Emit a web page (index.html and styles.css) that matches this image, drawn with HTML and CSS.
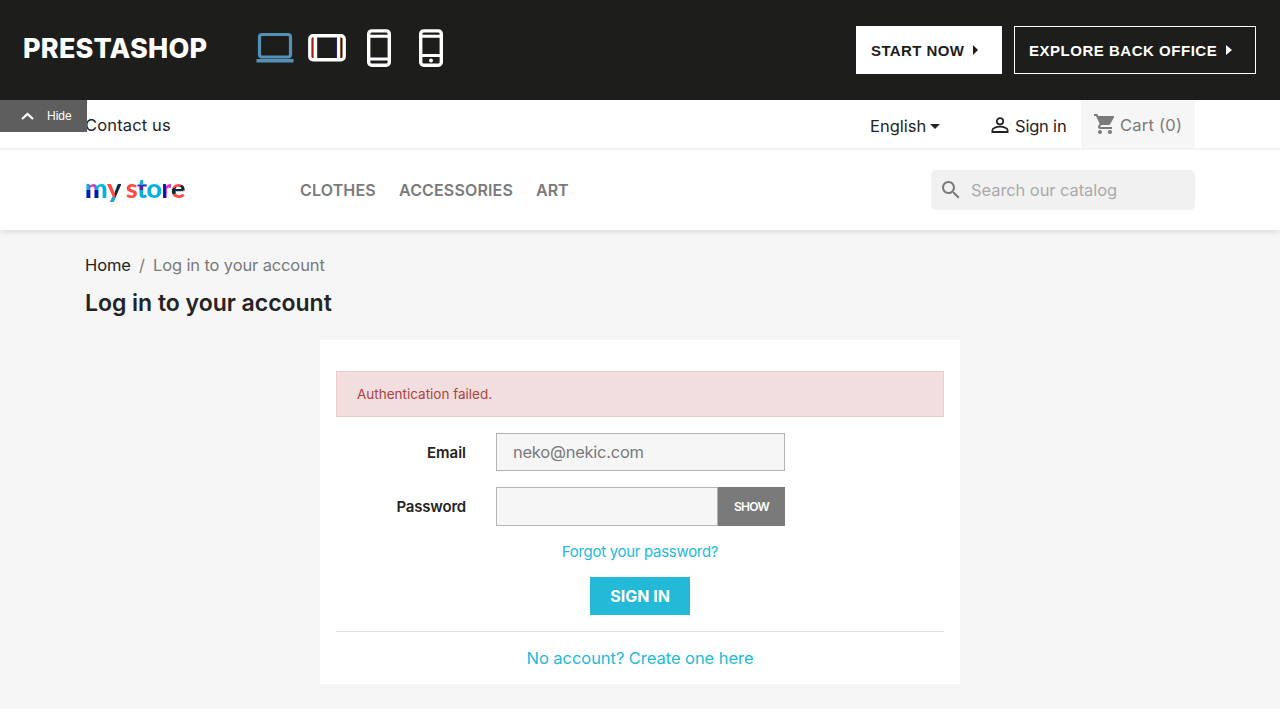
FILE: index.html
```html
<!DOCTYPE html>
<html lang="en">
<head>
<meta charset="utf-8">
<title>Log in to your account</title>
<link rel="stylesheet" href="styles.css">
</head>
<body>
<header class="demo-bar">
  <span class="brand">PRESTASHOP</span>
  <div class="devices">
    <svg class="device laptop" width="38" height="38" viewBox="0 0 38 38"><rect x="3.500" y="5.500" width="31" height="22.500" rx="2.500" fill="none" stroke="currentColor" stroke-width="3.200"/><path d="M.5 30h37v3.500H.5z" fill="currentColor"/></svg>
    <svg class="device tablet" width="38" height="38" viewBox="0 0 38 38"><rect x="1.800" y="6.800" width="34.400" height="24" rx="3.200" fill="none" stroke="currentColor" stroke-width="3.400"/><path d="M7.500 8v22M30.500 8v22" stroke="currentColor" stroke-width="4"/><path d="M4.500 8.500v20.500M9.500 8.500v20.500" stroke="#a3211c" stroke-width="1"/><path d="M28.500 8.500v20.500" stroke="#1c1ca8" stroke-width="1"/><path d="M32.500 8.500v20.500" stroke="#8a5a12" stroke-width="1"/></svg>
    <svg class="device phone" width="26" height="38" viewBox="0 0 26 38"><rect x="2.700" y="1.900" width="20.600" height="34.400" rx="3" fill="none" stroke="currentColor" stroke-width="3.400"/><path d="M3 7.200h20M3 30h20" stroke="currentColor" stroke-width="3"/></svg>
    <svg class="device mobile" width="26" height="38" viewBox="0 0 26 38"><rect x="2.700" y="1.900" width="20.600" height="34.400" rx="3" fill="none" stroke="currentColor" stroke-width="3.400"/><path d="M3 7.200h20M3 26.400h20" stroke="currentColor" stroke-width="3"/><circle cx="13" cy="31.400" r="2" fill="currentColor"/></svg>
  </div>
  <a class="demo-btn start"><span>START NOW</span><svg width="5" height="10" viewBox="0 0 5 10"><path d="M0 0l5 5-5 5z" fill="currentColor"/></svg></a>
  <a class="demo-btn explore"><span>EXPLORE BACK OFFICE</span><svg width="6" height="10" viewBox="0 0 6 10"><path d="M0 0l6 5-6 5z" fill="currentColor"/></svg></a>
</header>
<div class="shop">
  <a class="hide-tab"><svg width="13" height="8" viewBox="0 0 13 8"><path d="M1 7l5.500-5L12 7" fill="none" stroke="#fff" stroke-width="2.300"/></svg><span>Hide</span></a>
  <nav class="top-nav"><div class="container top-row">
    <a class="t contact">Contact us</a>
    <a class="t language"><span>English</span><svg width="10" height="5" viewBox="0 0 10 5"><path d="M0 0h10L5 5z" fill="currentColor"/></svg></a>
    <a class="t signin"><svg width="18" height="17" viewBox="0 0 18 17"><circle cx="9" cy="4.300" r="3.200" fill="none" stroke="currentColor" stroke-width="1.800"/><path d="M1.400 15v-2c0-2 4.300-3.300 7.600-3.300s7.600 1.300 7.600 3.300v2z" fill="none" stroke="currentColor" stroke-width="1.800"/></svg><span>Sign in</span></a>
    <a class="t cart"><svg width="24" height="24" viewBox="0 0 24 24"><path fill="currentColor" d="M7 18c-1.100 0-1.990.9-1.990 2S5.900 22 7 22s2-.9 2-2-.9-2-2-2zM1 2v2h2l3.600 7.590-1.350 2.450c-.16.280-.25.610-.25.960 0 1.100.9 2 2 2h12v-2H7.420c-.14 0-.25-.11-.25-.25l.03-.12.900-1.630h7.450c.75 0 1.410-.41 1.750-1.030l3.580-6.490c.08-.14.120-.31.120-.48 0-.55-.45-1-1-1H5.210l-.94-2H1zm16 16c-1.100 0-1.990.9-1.990 2s.89 2 1.990 2 2-.9 2-2-.9-2-2-2z"/></svg><span>Cart (0)</span></a>
  </div></nav>
  <div class="main-header"><div class="container header-row">
    <a class="store-logo"><span class="l-m">m</span><span class="l-y">y</span><span class="l-s">s</span><span class="l-t">t</span><span class="l-o">o</span><span class="l-r">r</span><span class="l-e">e</span></a>
    <a class="menu clothes">CLOTHES</a><a class="menu accessories">ACCESSORIES</a><a class="menu art">ART</a>
    <div class="search"><svg width="24" height="24" viewBox="0 0 24 24"><path fill="currentColor" d="M15.500 14h-.79l-.28-.27C15.410 12.590 16 11.110 16 9.500 16 5.910 13.090 3 9.500 3S3 5.910 3 9.500 5.910 16 9.500 16c1.610 0 3.090-.59 4.230-1.570l.27.280v.79l5 4.990L20.490 19l-4.990-5zm-6 0C7.010 14 5 11.990 5 9.500S7.010 5 9.500 5 14 7.010 14 9.500 11.990 14 9.500 14z"/></svg><span>Search our catalog</span></div>
  </div></div>
  <main class="container content">
    <div class="crumbs"><a class="home">Home</a><span class="slash">/</span><span class="here">Log in to your account</span></div>
    <h1><span>Log in to your account</span></h1>
    <section class="card">
      <div class="alert"><span>Authentication failed.</span></div>
      <div class="field"><label><span class="email-label">Email</span></label><div class="input email"><span>neko@nekic.com</span></div></div>
      <div class="field"><label><span class="pass-label">Password</span></label><div class="input pass"></div><div class="show"><span>SHOW</span></div></div>
      <a class="forgot"><span>Forgot your password?</span></a>
      <div class="submit"><span>SIGN IN</span></div>
      <a class="create"><span>No account? Create one here</span></a>
    </section>
  </main>
</div>
</body>
</html>
```
FILE: styles.css
```css
* { box-sizing: border-box; }
body { margin: 0; height: 720px; overflow: hidden; background: #fff; color: #232323; font-family: Inter, "Liberation Sans", sans-serif; font-size: 16.5px; }
svg { display: block; flex: none; }
a, span { white-space: nowrap; }
.demo-bar { height: 100px; background: #1d1d1b; color: #fff; display: flex; align-items: flex-start; padding: 26px 24px 0 23px; }
.brand { width: 233px; font-size: 27px; font-weight: 800; letter-spacing: .2px; line-height: 45px; }
.devices { display: flex; gap: 0; padding-top: 3px; margin-right: auto; }
.laptop { color: #5591b5; margin-right: 14px; }
.tablet { margin-right: 20px; }
.phone { margin-right: 26px; }
.demo-btn { height: 48px; display: flex; align-items: center; gap: 9px; border: 1px solid #fff; font: bold 15px "Liberation Sans", Arial, sans-serif; letter-spacing: .52px; padding: 0 0 0 14px; }
.demo-btn svg { margin-bottom: 1px; }
.start { width: 146px; margin-right: 12px; background: #fff; color: #1d1d1b; letter-spacing: .4px; }
.explore { width: 242px; }
.shop { position: relative; height: 609px; background: #f6f6f6; }
.hide-tab { position: absolute; left: 0; top: 0; z-index: 2; width: 87px; height: 32px; background: #5e5e5e; color: #fff; display: flex; align-items: center; padding-left: 21px; gap: 13px; font: 12px "Liberation Sans", Arial, sans-serif; }
.container { width: 1110px; margin: 0 auto; }
.top-nav { height: 50px; background: #fff; border-bottom: 2px solid #f6f6f6; }
.top-row { display: flex; height: 48px; }
.t { display: flex; align-items: center; height: 50px; }
.contact { width: 785px; letter-spacing: .15px; }
.language { width: 121px; gap: 4px; padding-top: 2px; }
.signin { width: 90px; gap: 6px; padding-top: 1px; letter-spacing: -.2px; }
.signin span { padding-top: 1px; }
.cart { width: 114px; height: 48px; background: #f6f6f6; color: #7a7a7a; padding-left: 12px; gap: 3px; letter-spacing: .25px; }
.cart span { padding-top: 2px; }
.main-header { height: 80px; background: #fff; box-shadow: 0 2px 5px rgba(0,0,0,.11); position: relative; }
.header-row { height: 80px; display: flex; align-items: center; }
.store-logo { width: 215px; display: flex; font-family: Lato, Inter, sans-serif; font-size: 27px; line-height: 32px; font-weight: 900; letter-spacing: -.7px; padding-bottom: 5px; }
.store-logo span { color: transparent; background-clip: text; -webkit-background-clip: text; }
.l-m { background: linear-gradient(180deg, transparent 55%, #011cad 55%) 0 0/14px 100% no-repeat, linear-gradient(90deg, #08b0df 20%, #d13ac0 20% 52%, #08b0df 52%); }
.l-y { background: linear-gradient(180deg, transparent 78%, #08b0df 78%), linear-gradient(90deg, #ff4a44 60%, #0b2b3c 60%); margin-right: 5px; }
.l-s { background: #ff4a44; }
.l-t { background: linear-gradient(180deg, #08b0df 42%, #5420bb 42% 55%, #08b0df 55%); }
.l-o { background: #08b0df; }
.l-r { background: linear-gradient(90deg, #011cad 55%, #d13ac0 55%); }
.l-e { background: linear-gradient(160deg, #ff4a44 46%, #0b2b3c 46% 62%, #ff4a44 62%); }
.menu { font-size: 16px; font-weight: 600; color: #7a7a7a; letter-spacing: .15px; }
.clothes { width: 99px; }
.accessories { width: 137px; }
.art { letter-spacing: 0; }
.search { width: 264px; height: 40px; margin-left: auto; background: #f1f1f1; border-radius: 5px; display: flex; align-items: center; padding-left: 8px; gap: 8px; color: #7a7a7a; }
.search span { color: #aaa; letter-spacing: -.08px; }
.content { padding-top: 23px; }
.crumbs { display: flex; height: 24px; line-height: 24px; color: #7a7a7a; letter-spacing: -.13px; }
.home { color: #232323; width: 54px; }
.slash { width: 14px; }
h1 { margin: 9px 0 0; height: 34px; font-size: 23px; line-height: 35px; font-weight: 600; letter-spacing: -.02px; }
.card { width: 640px; height: 344px; margin: 20px auto 0; background: #fff; padding: 31px 16px 0; display: flex; flex-direction: column; align-items: center; }
.alert { width: 608px; height: 46px; border: 1px solid #ebcccc; background: #f2dede; color: #a94442; padding-left: 20px; font-size: 13.500px; line-height: 44px; margin-bottom: 16px; }
.field { width: 608px; display: flex; height: 38px; margin-bottom: 16px; }
.field + .field { height: 39px; margin-bottom: 14px; }
label { width: 160px; padding-right: 30px; text-align: right; font-size: 15px; font-weight: 600; line-height: 40px; }
.pass-label { letter-spacing: -.2px; }
.input { border: 1px solid #b5b5b5; background: #f6f6f6; color: #7a7a7a; padding-left: 16px; line-height: 36px; letter-spacing: -.25px; }
.email { width: 289px; }
.pass { width: 222px; }
.show { width: 67px; background: #7a7a7a; color: #fff; font-size: 12px; font-weight: 600; line-height: 39px; text-align: center; letter-spacing: -.8px; }
.forgot { font-size: 15px; line-height: 24px; height: 24px; color: #24b9d7; margin-bottom: 13px; letter-spacing: -.3px; }
.submit { width: 100px; height: 38px; background: #24b9d7; color: #fff; font-size: 16px; font-weight: 700; line-height: 38px; text-align: center; margin-bottom: 16px; }
.create { width: 608px; border-top: 1px solid #e3e3e3; text-align: center; padding-top: 14px; line-height: 24px; color: #24b9d7; letter-spacing: -.05px; }
```
